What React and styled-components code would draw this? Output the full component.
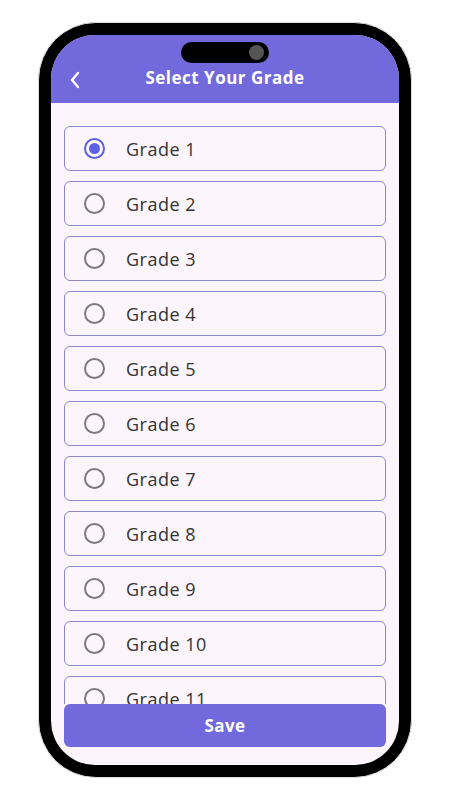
import React, { useState } from 'react'
import styled, { createGlobalStyle } from 'styled-components'

const GlobalStyle = createGlobalStyle`
    body {
        margin: 0;
        background: #fff;
        font-family: "Open Sans", "Liberation Sans", sans-serif;
    }
`

const Page = styled.div`
    display: flex;
    padding: 22px 0 0 38px;
`

const Phone = styled.div`
    width: 374px;
    height: 756px;
    box-sizing: border-box;
    padding: 12px;
    background: #000;
    border: 1px solid #dcdcdc;
    border-radius: 58px;
`

const Screen = styled.div`
    display: flex;
    flex-direction: column;
    height: 100%;
    border-radius: 44px;
    overflow: hidden;
    background: #fcf5fc;
`

const Header = styled.header`
    position: relative;
    display: flex;
    align-items: center;
    justify-content: center;
    flex-shrink: 0;
    height: 68px;
    box-sizing: border-box;
    padding-top: 16px;
    background: #7269dc;

    h1 {
        margin: 0;
        font-size: 17px;
        font-weight: 700;
        letter-spacing: 0.5px;
        color: #fff;
    }
`

const Notch = styled.div`
    position: absolute;
    top: 7px;
    left: 130px;
    width: 88px;
    height: 21px;
    border-radius: 11px;
    background: #000;

    &::after {
        content: '';
        position: absolute;
        right: 5px;
        top: 3px;
        width: 15px;
        height: 15px;
        border-radius: 50%;
        background: #555;
    }
`

const Back = styled.button`
    position: absolute;
    left: 14px;
    top: 31px;
    display: flex;
    padding: 4px;
    border: none;
    background: none;
`

const List = styled.div`
    display: flex;
    flex-direction: column;
    gap: 10px;
    flex: 1;
    overflow: hidden;
    padding: 23px 13px 0;
`

const Item = styled.label`
    display: flex;
    align-items: center;
    gap: 21px;
    flex-shrink: 0;
    height: 45px;
    box-sizing: border-box;
    padding-left: 19px;
    border: 1px solid #8e88ca;
    border-radius: 6px;
    font-size: 18px;
    font-weight: 500;
    letter-spacing: 0.5px;
    color: #333;
`

const Radio = styled.span`
    display: flex;
    align-items: center;
    justify-content: center;
    width: 21px;
    height: 21px;
    box-sizing: border-box;
    border: 2px solid ${p => (p.$on ? '#5b62ea' : '#7a7a80')};
    border-radius: 50%;

    &::after {
        content: '';
        display: ${p => (p.$on ? 'block' : 'none')};
        width: 11px;
        height: 11px;
        border-radius: 50%;
        background: #5b62ea;
    }
`

const Footer = styled.div`
    flex-shrink: 0;
    padding: 0 13px 18px;
`

const SaveButton = styled.button`
    width: 100%;
    height: 43px;
    border: none;
    border-radius: 6px;
    background: #7269dc;
    font-family: inherit;
    font-size: 17px;
    font-weight: 700;
    letter-spacing: 0.4px;
    color: #fff;
`

const grades = Array.from({ length: 12 }, (_, i) => i + 1)

function App() {
    const [grade, setGrade] = useState(1)

    return (
        <Page>
            <GlobalStyle />
            <Phone>
                <Screen>
                    <Header>
                        <Notch />
                        <Back>
                            <svg width="12" height="20" viewBox="0 0 12 20" fill="none">
                                <path d="M9 3L3 10l6 7" stroke="#fff" strokeWidth="2.4" strokeLinecap="round" strokeLinejoin="round" />
                            </svg>
                        </Back>
                        <h1>Select Your Grade</h1>
                    </Header>
                    <List>
                        {grades.map(g => (
                            <Item key={g} onClick={() => setGrade(g)}>
                                <Radio $on={grade === g} />
                                Grade {g}
                            </Item>
                        ))}
                    </List>
                    <Footer>
                        <SaveButton>Save</SaveButton>
                    </Footer>
                </Screen>
            </Phone>
        </Page>
    )
}

export default App
